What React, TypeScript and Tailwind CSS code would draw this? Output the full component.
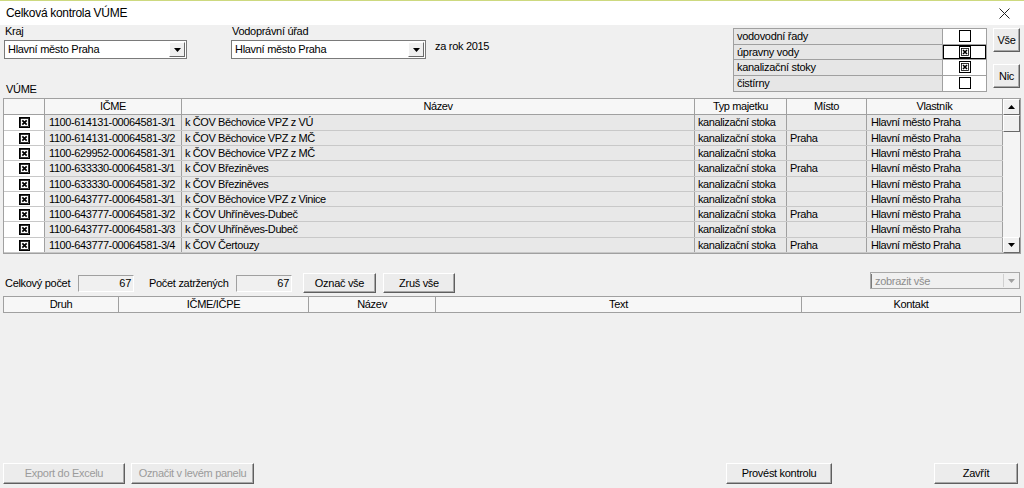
import React from 'react';

const font = "font-['Liberation_Sans',Arial,sans-serif]";

const rows = [
  ['1100-614131-00064581-3/1', 'k ČOV Běchovice VPZ z VÚ', 'kanalizační stoka', '', 'Hlavní město Praha'],
  ['1100-614131-00064581-3/2', 'k ČOV Běchovice VPZ z MČ', 'kanalizační stoka', 'Praha', 'Hlavní město Praha'],
  ['1100-629952-00064581-3/1', 'k ČOV Běchovice VPZ z MČ', 'kanalizační stoka', '', 'Hlavní město Praha'],
  ['1100-633330-00064581-3/1', 'k ČOV Březiněves', 'kanalizační stoka', 'Praha', 'Hlavní město Praha'],
  ['1100-633330-00064581-3/2', 'k ČOV Březiněves', 'kanalizační stoka', '', 'Hlavní město Praha'],
  ['1100-643777-00064581-3/1', 'k ČOV Běchovice VPZ z Vinice', 'kanalizační stoka', '', 'Hlavní město Praha'],
  ['1100-643777-00064581-3/2', 'k ČOV Uhříněves-Dubeč', 'kanalizační stoka', 'Praha', 'Hlavní město Praha'],
  ['1100-643777-00064581-3/3', 'k ČOV Uhříněves-Dubeč', 'kanalizační stoka', '', 'Hlavní město Praha'],
  ['1100-643777-00064581-3/4', 'k ČOV Čertouzy', 'kanalizační stoka', 'Praha', 'Hlavní město Praha'],
];
const rowTall = [true, false, false, true, false, false, false, true, false];

const checklist = [
  { label: 'vodovodní řady', checked: false },
  { label: 'úpravny vody', checked: true, focus: true },
  { label: 'kanalizační stoky', checked: true },
  { label: 'čistírny', checked: false },
];

function GridCheck() {
  return (
    <svg width="11" height="11" viewBox="0 0 11 11">
      <rect x="0.5" y="0.5" width="10" height="10" fill="#fff" stroke="#000" />
      <rect x="1.5" y="1.5" width="8" height="8" fill="none" stroke="#000" strokeWidth="0.8" />
      <path d="M3.3 3.3 L7.7 7.7 M7.7 3.3 L3.3 7.7" stroke="#000" strokeWidth="1.7" />
    </svg>
  );
}

function ListCheck({ checked }: { checked: boolean }) {
  return (
    <svg width="12" height="12" viewBox="0 0 12 12">
      <rect x="0.5" y="0.5" width="11" height="11" fill="#fff" stroke="#000" />
      {checked && (
        <>
          <rect x="2.5" y="2.5" width="7" height="7" fill="#fff" stroke="#000" strokeWidth="0.8" />
          <path d="M4 4 L8 8 M8 4 L4 8" stroke="#000" strokeWidth="1.6" />
        </>
      )}
    </svg>
  );
}

function Arrow({ up, color = '#000' }: { up?: boolean; color?: string }) {
  return (
    <svg width="7" height="4" viewBox="0 0 7 4">
      <path d={up ? 'M0 4 L7 4 L3.5 0 Z' : 'M0 0 L7 0 L3.5 4 Z'} fill={color} />
    </svg>
  );
}

function Combo({ value, width }: { value: string; width: string }) {
  return (
    <div className={`${width} h-[19px] flex items-center bg-white border border-[#7a7a7a]`}>
      <span className="flex-1 pl-[3px] text-[11px] text-black truncate">{value}</span>
      <div className="w-[16px] h-[15px] mr-[1px] flex items-center justify-center bg-[#f0f0f0] border border-t-white border-l-white border-r-[#696969] border-b-[#696969]">
        <Arrow />
      </div>
    </div>
  );
}

function Btn({ label, className, disabled }: { label: string; className: string; disabled?: boolean }) {
  return (
    <div
      className={`${className} flex items-center justify-center bg-[#ececec] border border-t-white border-l-white border-r-[#5f5f5f] border-b-[#5f5f5f] shadow-[inset_-1px_-1px_0_#a8a8a8] text-[11px] ${
        disabled ? 'text-[#9b9b9b]' : 'text-black'
      }`}
    >
      {label}
    </div>
  );
}

export default function App() {
  return (
    <div className={`${font} w-[1024px] h-[488px] flex flex-col bg-[#f0f0f0] overflow-hidden text-black`}>
      {/* title bar */}
      <div className="h-[25px] shrink-0 bg-white border-t border-[#cdd97f] flex items-center justify-between pl-[6px] pr-[14px]">
        <span className="text-[12px] tracking-[-0.3px]">Celková kontrola VÚME</span>
        <svg width="11" height="11" viewBox="0 0 11 11">
          <path d="M0.5 0.5 L10.5 10.5 M10.5 0.5 L0.5 10.5" stroke="#222" strokeWidth="1" />
        </svg>
      </div>

      {/* top filters */}
      <div className="flex items-start h-[73px] shrink-0 text-[11px] tracking-[-0.3px]">
        <div className="flex flex-col pl-[4px]">
          <div className="flex items-start">
            <div className="flex flex-col w-[183px]">
              <span className="h-[13px] leading-[13px] pl-[1px]">Kraj</span>
              <div className="mt-[2px]">
                <Combo value="Hlavní město Praha" width="w-[183px]" />
              </div>
            </div>
            <div className="flex flex-col w-[195px] ml-[44px]">
              <span className="h-[13px] leading-[13px] pl-[1px]">Vodoprávní úřad</span>
              <div className="mt-[2px]">
                <Combo value="Hlavní město Praha" width="w-[195px]" />
              </div>
            </div>
            <span className="ml-[9px] mt-[15px] leading-[13px]">za rok 2015</span>
          </div>
          <span className="mt-[24px] pl-[2px] leading-[13px]">VÚME</span>
        </div>

        <div className="ml-auto mt-[3px] w-[254px] border border-[#a0a0a0] bg-white">
          {checklist.map((c) => (
            <div key={c.label} className="flex h-[15.5px] border-b border-[#a0a0a0] last:border-b-0">
              <div className="w-[209px] bg-[#e6e6e6] border-r border-[#a0a0a0] pl-[3px] leading-[15px]">{c.label}</div>
              <div
                className={`flex-1 flex items-center justify-center bg-white ${
                  c.focus ? 'border border-black' : ''
                }`}
              >
                <ListCheck checked={c.checked} />
              </div>
            </div>
          ))}
        </div>

        <div className="flex flex-col gap-[12px] ml-[6px] mr-[4px] mt-[3px]">
          <Btn label="Vše" className="w-[27px] h-[24px]" />
          <Btn label="Nic" className="w-[27px] h-[24px]" />
        </div>
      </div>

      {/* main grid */}
      <div className="mx-[3px] mt-0 h-[156px] shrink-0 flex border border-[#a0a0a0] bg-white text-[11px] tracking-[-0.4px]">
        <div className="flex-1 flex flex-col">
          <div className="flex h-[16px] bg-[#f7f7f7] border-b border-[#a0a0a0] leading-[15px] text-center">
            <div className="w-[41px] border-r border-[#a0a0a0]" />
            <div className="w-[137px] border-r border-[#a0a0a0]">IČME</div>
            <div className="w-[513px] border-r border-[#a0a0a0]">Název</div>
            <div className="w-[92px] border-r border-[#a0a0a0]">Typ majetku</div>
            <div className="w-[80px] border-r border-[#a0a0a0]">Místo</div>
            <div className="flex-1 border-r border-[#a0a0a0]">Vlastník</div>
          </div>
          {rows.map((r, i) => (
            <div
              key={r[0]}
              className={`flex ${rowTall[i] ? 'h-[16px]' : 'h-[15px]'} border-b border-[#c8c8c8] items-center`}
            >
              <div className="w-[41px] h-full flex items-center justify-center bg-white border-r border-[#a0a0a0]">
                <GridCheck />
              </div>
              <div className="w-[137px] h-full bg-[#e8e8e8] border-r border-[#a0a0a0] pl-[4px] leading-[14px] whitespace-nowrap overflow-hidden">{r[0]}</div>
              <div className="w-[513px] h-full bg-[#e8e8e8] border-r border-[#a0a0a0] pl-[3px] leading-[14px] truncate">{r[1]}</div>
              <div className="w-[92px] h-full bg-[#e8e8e8] border-r border-[#a0a0a0] pl-[3px] leading-[14px] truncate">{r[2]}</div>
              <div className="w-[80px] h-full bg-[#e8e8e8] border-r border-[#a0a0a0] pl-[3px] leading-[14px] truncate">{r[3]}</div>
              <div className="flex-1 h-full bg-[#e8e8e8] border-r border-[#a0a0a0] pl-[4px] leading-[14px] truncate">{r[4]}</div>
            </div>
          ))}
        </div>
        {/* scrollbar */}
        <div className="w-[17px] flex flex-col bg-[#f4f4f4]">
          <div className="h-[16px] flex items-center justify-center bg-[#f0f0f0] border border-t-white border-l-white border-r-[#696969] border-b-[#696969]">
            <Arrow up />
          </div>
          <div className="h-[17px] bg-[#f0f0f0] border border-t-white border-l-white border-r-[#696969] border-b-[#696969]" />
          <div className="flex-1" />
          <div className="h-[16px] flex items-center justify-center bg-[#f0f0f0] border border-t-white border-l-white border-r-[#696969] border-b-[#696969]">
            <Arrow />
          </div>
        </div>
      </div>

      {/* counters */}
      <div className="mt-[18px] h-[22px] shrink-0 flex items-center pl-[5px] pr-[4px] text-[11px] tracking-[-0.3px]">
        <span className="w-[73px]">Celkový počet</span>
        <div className="w-[56px] h-[17px] border border-t-[#a0a0a0] border-l-[#a0a0a0] border-r-white border-b-white text-right pr-[2px] leading-[15px]">67</div>
        <span className="ml-[15px] w-[87px]">Počet zatržených</span>
        <div className="w-[56px] h-[17px] border border-t-[#a0a0a0] border-l-[#a0a0a0] border-r-white border-b-white text-right pr-[2px] leading-[15px]">67</div>
        <Btn label="Označ vše" className="ml-[11px] w-[73px] h-[20px]" />
        <Btn label="Zruš vše" className="ml-[7px] w-[72px] h-[20px]" />
        <div className="ml-auto self-start w-[150px] h-[17px] flex items-center bg-[#f0f0f0] border border-[#a8a8a8]">
          <span className="flex-1 pl-[3px] text-[#8d8d8d] border-l border-[#7a7a7a] leading-[14px]">zobrazit vše</span>
          <div className="w-[15px] h-[13px] mr-[1px] flex items-center justify-center border-l border-[#d0d0d0]">
            <Arrow color="#a0a0a0" />
          </div>
        </div>
      </div>

      {/* detail grid */}
      <div className="mx-[3px] mt-[2px] h-[17px] shrink-0 flex border border-[#a0a0a0] bg-[#f7f7f7] text-[11px] tracking-[-0.3px] text-center leading-[15px]">
        <div className="w-[115px] border-r border-[#a0a0a0]">Druh</div>
        <div className="w-[190px] border-r border-[#a0a0a0]">IČME/IČPE</div>
        <div className="w-[127px] border-r border-[#a0a0a0]">Název</div>
        <div className="w-[366px] border-r border-[#a0a0a0]">Text</div>
        <div className="flex-1">Kontakt</div>
      </div>
      <div className="flex-1" />

      {/* bottom buttons */}
      <div className="h-[21px] mb-[4px] shrink-0 flex items-center pl-[3px] pr-[6px] tracking-[-0.3px]">
        <Btn label="Export do Excelu" className="w-[122px] h-[21px]" disabled />
        <Btn label="Označit v levém panelu" className="ml-[6px] w-[123px] h-[21px]" disabled />
        <Btn label="Provést kontrolu" className="ml-auto w-[106px] h-[21px]" />
        <Btn label="Zavřít" className="ml-[102px] w-[84px] h-[21px]" />
      </div>
    </div>
  );
}
